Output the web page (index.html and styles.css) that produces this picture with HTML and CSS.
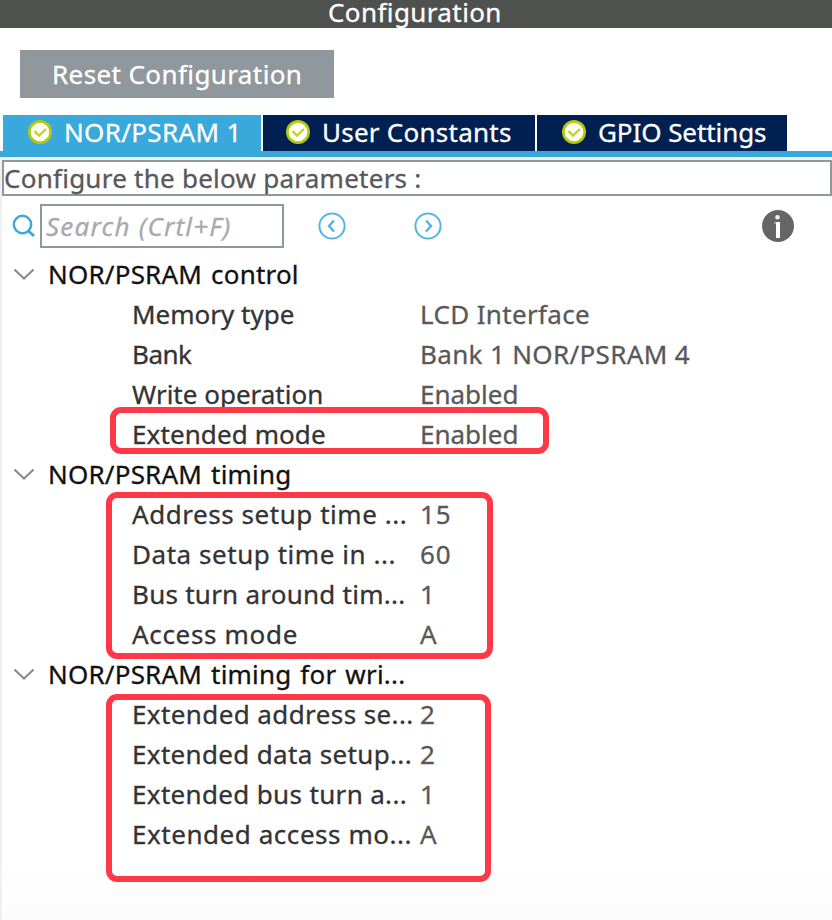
FILE: index.html
```html
<!DOCTYPE html>
<html lang="en">
<head>
<meta charset="utf-8">
<title>Configuration</title>
<link rel="stylesheet" href="styles.css">
</head>
<body>
<svg class="defs" aria-hidden="true">
  <symbol id="check" viewBox="0 0 24 24">
    <circle cx="12" cy="12" r="12" fill="#b5c80f"/>
    <circle cx="12" cy="12" r="9.3" fill="#fdfef2"/>
    <path d="M6.5 11.2 11 15.6 18 9" fill="none" stroke="#c3d32c" stroke-width="2.4"/>
  </symbol>
  <symbol id="chevron" viewBox="0 0 20 12">
    <path d="M0.5 1.5 10 10.5 19.5 1.5" fill="none" stroke="#8a8a8a" stroke-width="2"/>
  </symbol>
</svg>
<header class="title"><span class="ls-40">Configuration</span></header>
<div class="toolbar"><button class="reset ls-40">Reset Configuration</button></div>
<nav class="tabs">
  <a class="tab tab-active"><svg class="check"><use href="#check"/></svg><span class="ls-34">NOR/PSRAM 1</span></a>
  <a class="tab tab-user"><svg class="check"><use href="#check"/></svg><span class="ls-25">User Constants</span></a>
  <a class="tab tab-gpio"><svg class="check"><use href="#check"/></svg><span class="ls-n08">GPIO Settings</span></a>
</nav>
<main class="panel">
  <div class="hint ls-25">Configure the below parameters :</div>
  <div class="search-row">
    <svg class="magnifier" viewBox="0 0 24 24"><circle cx="10.500" cy="10.500" r="8.700" fill="none" stroke="#39a9dc" stroke-width="2.400"/><path d="M16.500 17 22 22" stroke="#39a9dc" stroke-width="3"/></svg>
    <div class="search"><span>Search (Crtl+F)</span></div>
    <svg class="nav prev" viewBox="0 0 28 28"><circle cx="14" cy="14" r="12.600" fill="none" stroke="#55b4e1" stroke-width="2"/><path d="M16 8.500 11 14l5 5.500" fill="none" stroke="#55b4e1" stroke-width="2.400"/></svg>
    <svg class="nav next" viewBox="0 0 28 28"><circle cx="14" cy="14" r="12.600" fill="none" stroke="#55b4e1" stroke-width="2"/><path d="M12 8.500 17 14l-5 5.500" fill="none" stroke="#55b4e1" stroke-width="2.400"/></svg>
    <svg class="info" viewBox="0 0 32 32"><circle cx="16" cy="16" r="16" fill="#666"/><circle cx="15.500" cy="7.300" r="2.300" fill="#eee"/><path d="M12 12h2v1.500h-2z" fill="#bbb"/><path d="M14 12h4v16h-4z" fill="#fff"/></svg>
  </div>

  <section class="group">
    <h2><svg class="chevron"><use href="#chevron"/></svg>NOR/PSRAM control</h2>
    <div class="row"><span class="name ls-0">Memory type</span><span class="value ls-34">LCD Interface</span></div>
    <div class="row"><span class="name ls-n50">Bank</span><span class="value ls-34">Bank 1 NOR/PSRAM 4</span></div>
    <div class="row"><span class="name ls-0">Write operation</span><span class="value ls-0">Enabled</span></div>
    <div class="row"><span class="name ls-10">Extended mode</span><span class="value ls-0">Enabled</span></div>
    <div class="mark mark-mode"></div>
  </section>

  <section class="group">
    <h2><svg class="chevron"><use href="#chevron"/></svg>NOR/PSRAM timing</h2>
    <div class="row"><span class="name ls-55">Address setup time ...</span><span class="value ls-100">15</span></div>
    <div class="row"><span class="name ls-55">Data setup time in ...</span><span class="value ls-100">60</span></div>
    <div class="row"><span class="name ls-25">Bus turn around tim...</span><span class="value">1</span></div>
    <div class="row"><span class="name ls-67">Access mode</span><span class="value">A</span></div>
    <div class="mark mark-timing"></div>
  </section>

  <section class="group">
    <h2><svg class="chevron"><use href="#chevron"/></svg>NOR/PSRAM timing for wri...</h2>
    <div class="row"><span class="name ls-40">Extended address se...</span><span class="value">2</span></div>
    <div class="row"><span class="name ls-34">Extended data setup...</span><span class="value">2</span></div>
    <div class="row"><span class="name ls-34">Extended bus turn a...</span><span class="value">1</span></div>
    <div class="row"><span class="name ls-55">Extended access mo...</span><span class="value">A</span></div>
    <div class="mark mark-write"></div>
  </section>
</main>
</body>
</html>
```

FILE: styles.css
```css
* { box-sizing: border-box; }

body {
  margin: 0;
  width: 832px;
  height: 920px;
  overflow: hidden;
  display: flex;
  flex-direction: column;
  background: #fff;
  color: #333;
  font: 26px/40px "Noto Sans", "Open Sans", sans-serif;
  white-space: nowrap;
  -webkit-text-stroke: 0.3px;
}

svg { display: block; flex: none; }
.defs { position: absolute; width: 0; height: 0; }

.title {
  height: 28px;
  padding-left: 328px;
  background: #4f514f;
  color: #fff;
  line-height: 24px;
}

.toolbar { height: 87px; padding: 22px 20px 0; }

.reset {
  display: block;
  width: 314px;
  height: 48px;
  padding: 0 0 0 32px;
  border: 0;
  background: #90979d;
  color: #fff;
  font: inherit;
  line-height: 48px;
  text-align: left;
}

.tabs {
  display: flex;
  gap: 2px;
  height: 42px;
  padding-left: 3px;
  border-bottom: 6px solid #39a9dc;
}

.tab {
  display: flex;
  gap: 12px;
  width: 258px;
  padding-left: 25px;
  background: #002052;
  color: #fff;
  line-height: 34px;
}

.tab-active { background: #39a9dc; }
.tab-user { width: 272px; padding-left: 23px; }
.tab-gpio { width: 250px; }
.check { width: 24px; height: 24px; margin-top: 5px; }

.panel {
  flex: 1;
  padding-top: 3px;
  border-left: 2px solid #f0f0f0;
  background: linear-gradient(#f0f1f3 3px, #fff 3px, #fff 700px, #fcfcfc);
}

.hint {
  height: 36px;
  border: 2px solid #90979d;
  background: #fff;
  color: #58585a;
  line-height: 32px;
}

.search-row {
  display: flex;
  height: 58px;
  padding: 8px 38px 0 10px;
}

.magnifier { width: 24px; height: 24px; margin: 10px 4px 0 0; }

.search {
  width: 244px;
  height: 44px;
  padding-left: 4px;
  border: 2px solid #90979d;
  color: #aaa;
  font-style: italic;
  letter-spacing: 1.2px;
}

.nav { width: 28px; height: 28px; margin-top: 8px; }
.prev { margin-left: 34px; }
.next { margin-left: 68px; }
.info { width: 32px; height: 32px; margin: 6px 0 0 auto; }

.group { position: relative; }

h2 {
  display: flex;
  align-items: center;
  gap: 14px;
  height: 40px;
  margin: 0;
  padding-left: 12px;
  color: #111;
  font-size: 26px;
  font-weight: 400;
  letter-spacing: 0.2px;
  word-spacing: 2px;
}

.chevron { width: 20px; height: 12px; }

.row {
  display: grid;
  grid-template-columns: 288px 1fr;
  height: 40px;
  padding-left: 130px;
}

.value { color: #58585a; }

.mark {
  position: absolute;
  border: 6px solid #ff3847;
  border-radius: 11px;
}

.mark-mode { left: 108px; top: 153px; width: 439px; height: 47px; }
.mark-timing { left: 104px; top: 38px; width: 387px; height: 167px; }
.mark-write { left: 104px; top: 40px; width: 385px; height: 188px; }

.ls-n50 { letter-spacing: -0.5px; }
.ls-n08 { letter-spacing: -0.08px; }
.ls-0 { letter-spacing: 0; }
.ls-10 { letter-spacing: 0.1px; }
.ls-25 { letter-spacing: 0.25px; }
.ls-34 { letter-spacing: 0.34px; }
.ls-40 { letter-spacing: 0.4px; }
.ls-55 { letter-spacing: 0.55px; }
.ls-67 { letter-spacing: 0.67px; }
.ls-100 { letter-spacing: 1px; }
```
